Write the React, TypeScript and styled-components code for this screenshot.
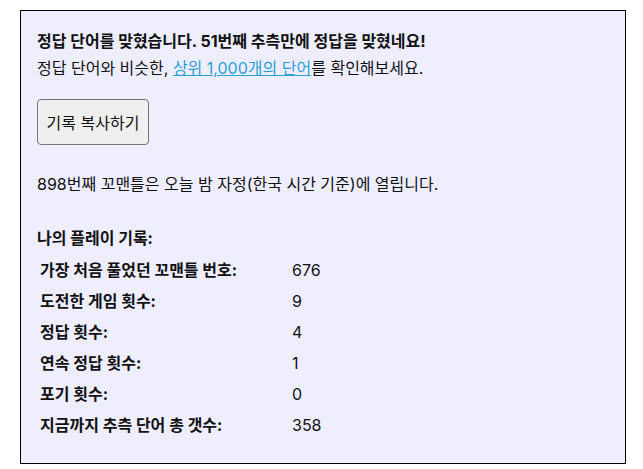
import React from "react";
import styled, { createGlobalStyle } from "styled-components";

const GlobalStyle = createGlobalStyle`
  body {
    margin: 0;
    background: #ffffff;
    font-family: Inter, "Noto Sans CJK KR", sans-serif;
    color: #111111;
  }
`;

const Page = styled.div`
  padding: 10px 17px 9px 20px;
`;

const ResultBox = styled.div`
  border: 1px solid #000000;
  background: #eeeeff;
  padding: 17px 16px 21px 16px;
  font-size: 16px;
  line-height: 27px;
`;

const Line = styled.p<{ $bold?: boolean }>`
  margin: 0;
  font-weight: ${(p) => (p.$bold ? 700 : 400)};
`;

const TopLink = styled.a`
  color: #2a9fd6;
  text-decoration: underline;
`;

const CopyButton = styled.button`
  margin: 17px 0 26px 0;
  height: 46px;
  width: 112px;
  padding: 0;
  font-family: inherit;
  font-size: 16px;
  color: #111111;
  background: #efefef;
  border: 1px solid #767676;
  border-radius: 4px;
`;

const StatsTitle = styled.p`
  margin: 27px 0 2px 0;
  font-weight: 700;
`;

const StatsTable = styled.table`
  border-collapse: separate;
  border-spacing: 2px;
`;

const Label = styled.th`
  text-align: left;
  font-weight: 700;
  padding: 2px 1px;
  width: 248px;
  line-height: 25px;
`;

const Value = styled.td`
  padding: 2px 1px;
  line-height: 25px;
`;

const stats: [string, string][] = [
  ["가장 처음 풀었던 꼬맨틀 번호:", "676"],
  ["도전한 게임 횟수:", "9"],
  ["정답 횟수:", "4"],
  ["연속 정답 횟수:", "1"],
  ["포기 횟수:", "0"],
  ["지금까지 추측 단어 총 갯수:", "358"],
];

export default function App() {
  return (
    <Page>
      <GlobalStyle />
      <ResultBox>
        <Line $bold>정답 단어를 맞혔습니다. 51번째 추측만에 정답을 맞혔네요!</Line>
        <Line>
          정답 단어와 비슷한, <TopLink href="#">상위 1,000개의 단어</TopLink>를 확인해보세요.
        </Line>
        <CopyButton>기록 복사하기</CopyButton>
        <Line>898번째 꼬맨틀은 오늘 밤 자정(한국 시간 기준)에 열립니다.</Line>
        <StatsTitle>나의 플레이 기록:</StatsTitle>
        <StatsTable>
          <tbody>
            {stats.map(([label, value]) => (
              <tr key={label}>
                <Label>{label}</Label>
                <Value>{value}</Value>
              </tr>
            ))}
          </tbody>
        </StatsTable>
      </ResultBox>
    </Page>
  );
}
